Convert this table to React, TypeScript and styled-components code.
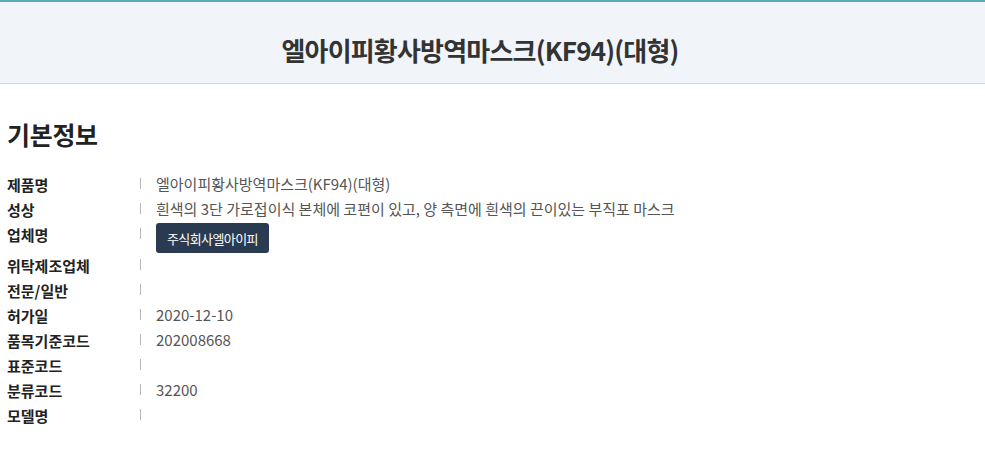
import React from 'react';
import styled, { createGlobalStyle } from 'styled-components';

interface InfoRow {
  label: string;
  value?: string;
  button?: string;
}

const rows: InfoRow[] = [
  { label: '제품명', value: '엘아이피황사방역마스크(KF94)(대형)' },
  { label: '성상', value: '흰색의 3단 가로접이식 본체에 코편이 있고, 양 측면에 흰색의 끈이있는 부직포 마스크' },
  { label: '업체명', button: '주식회사엘아이피' },
  { label: '위탁제조업체' },
  { label: '전문/일반' },
  { label: '허가일', value: '2020-12-10' },
  { label: '품목기준코드', value: '202008668' },
  { label: '표준코드' },
  { label: '분류코드', value: '32200' },
  { label: '모델명' },
];

const App: React.FC = () => {
  return (
    <>
      <GlobalStyle />
      <Header>
        <HeaderTitle>엘아이피황사방역마스크(KF94)(대형)</HeaderTitle>
      </Header>
      <Content>
        <SectionTitle>기본정보</SectionTitle>
        <InfoList>
          {rows.map((row) => (
            <Row key={row.label} $tall={!!row.button}>
              <Label>{row.label}</Label>
              <Divider />
              <Value>
                {row.button ? <CompanyButton>{row.button}</CompanyButton> : row.value}
              </Value>
            </Row>
          ))}
        </InfoList>
      </Content>
    </>
  );
};

export default App;

const GlobalStyle = createGlobalStyle`
  body {
    margin: 0;
    background: #fff;
    font-family: 'Noto Sans CJK KR', 'Noto Sans', sans-serif;
  }
`;

const Header = styled.header`
  height: 81px;
  padding-right: 25px;
  border-top: 2px solid #5aabbb;
  border-bottom: 1px solid #d3d7db;
  background: #f1f5fa;
  display: flex;
  align-items: center;
  justify-content: center;
`;

const HeaderTitle = styled.h1`
  margin: 0;
  padding-top: 13px;
  font-size: 26px;
  font-weight: 700;
  color: #333;
  letter-spacing: -0.8px;
`;

const Content = styled.main`
  padding: 0 7px;
`;

const SectionTitle = styled.h2`
  margin: 32px 0 21px;
  font-size: 25px;
  font-weight: 700;
  color: #222;
  line-height: 36px;
  letter-spacing: -0.3px;
`;

const InfoList = styled.div`
  display: flex;
  flex-direction: column;
`;

const Row = styled.div<{ $tall: boolean }>`
  display: flex;
  align-items: flex-start;
  height: ${(p) => (p.$tall ? '31px' : '25px')};
`;

const Label = styled.div`
  width: 133px;
  flex-shrink: 0;
  font-size: 15px;
  font-weight: 700;
  color: #222;
  line-height: 24px;
`;

const Divider = styled.span`
  width: 1px;
  height: 11px;
  margin-top: 5px;
  background: #b5b5b5;
  flex-shrink: 0;
`;

const Value = styled.div`
  padding-left: 15px;
  font-size: 15px;
  color: #555;
  line-height: 22px;
`;

const CompanyButton = styled.button`
  height: 30px;
  padding: 0 11px;
  border: none;
  border-radius: 3px;
  background: #2a3a50;
  color: #fff;
  font-family: 'Noto Sans CJK KR', 'Noto Sans', sans-serif;
  font-size: 13px;
  letter-spacing: -0.6px;
  cursor: pointer;
`;
